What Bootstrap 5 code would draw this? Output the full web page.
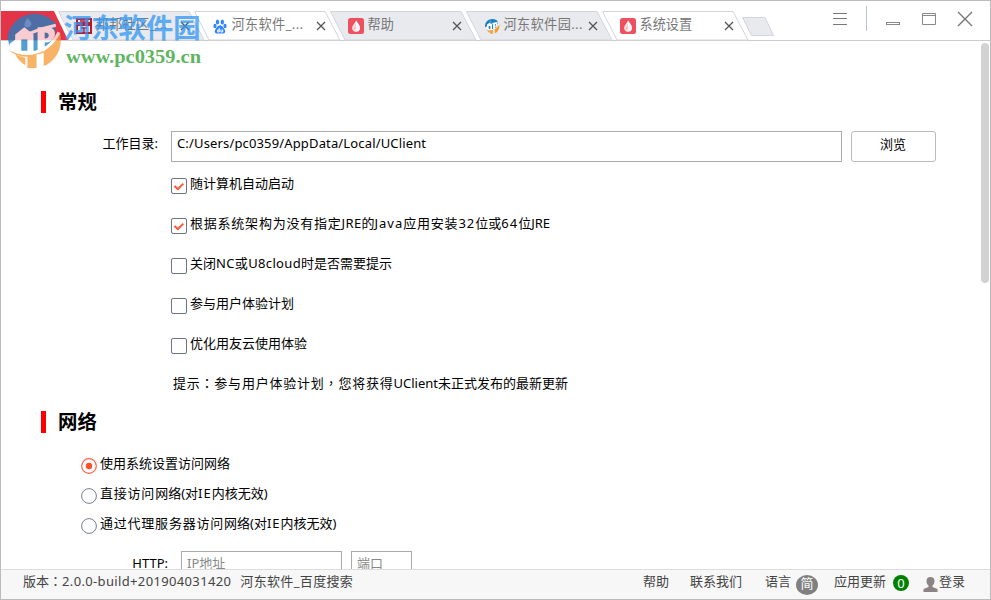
<!DOCTYPE html>
<html lang="zh-CN">
<head>
<meta charset="utf-8">
<title>系统设置</title>
<meta name="viewport" content="width=device-width, initial-scale=1">
<link href="https://cdn.jsdelivr.net/npm/bootstrap@5.3.0/dist/css/bootstrap.min.css" rel="stylesheet">
<style>
body{font:13px/20px "Noto Sans","Noto Sans CJK SC",sans-serif;color:#000;background:#fff}
.win{width:991px;height:600px;border:1px solid #bbb}
.topbar{height:40px;border-bottom:1px solid #ccc}
.strip{padding-top:10px}
.tab-first{width:56px;height:29px}
.tab-one{width:136px;height:29px;color:#777}
.tab-one>.shape,.tab-first>.shape{position:absolute;left:0;top:0;width:152px;height:30px}
.tab-one .ico{width:16px;height:16px;margin:7px 3.5px 0 19px}
.tab-one .cap{width:82.5px;font-size:13.2px;line-height:20px;margin-top:3px;white-space:nowrap}
.tab-one .x{width:10px;height:10px;margin:10px 0 0 2px}
.content-area{height:528px}
.sec{height:22px;padding-left:12px;border-left:5px solid #f00;font-size:19.4px;font-weight:700;line-height:22px;margin-left:40px}
.lbl{width:157px;line-height:24px}
.field{border:1px solid #aaa;border-radius:0;height:31px}
.path{width:671px;padding:1px 5px;line-height:21px;letter-spacing:.15px}
.browse{width:85px;height:31px;border:1px solid #bbb;border-radius:3px;margin-left:9px;font-size:13px;line-height:20px;padding:0 1px 5px 0;color:#000;background:#fff}
.opt{height:40px;line-height:18px;margin-left:170px}
.opt svg,.rad svg{width:16px;height:16px;margin:4px 3px 0 0}
.rad{height:30px;line-height:18px;margin-left:80px}
.w{letter-spacing:.78px}
.w1{letter-spacing:1px}
.w3{letter-spacing:.35px}
.mid{font-family:"Noto Sans CJK TC",sans-serif}
.statusbar{height:30px;background:#f7f7f7;border-top:1px solid #ddd;color:#444}
.thumb{right:1px;top:2px;width:8px;height:240px;border-radius:4px;background:#d2d2d2}
.lang{width:22px;height:20px;border-radius:50%;background:#808080;color:#fff}
.num{width:16px;height:16px;border-radius:50%;background:#008000;color:#fff;line-height:16px}
.wm{left:0;top:8px;width:205px;height:62px;pointer-events:none}
</style>
<script src="https://cdn.jsdelivr.net/npm/bootstrap@5.3.0/dist/js/bootstrap.bundle.min.js"></script>
</head>
<body class="overflow-hidden">
<svg width="0" height="0" class="position-absolute">
  <symbol id="close" viewBox="0 0 10 10"><path d="M1 1l8 8M9 1l-8 8" stroke="#555" stroke-width="1.3" fill="none"/></symbol>
  <symbol id="flame" viewBox="0 0 16 16"><rect width="16" height="16" rx="2.500" fill="#ef5060"/><path d="M8.2 2.500C9.500 5 12 7 12 9.800a3.900 3.900 0 0 1-7.800 0C4.200 7.500 7 5.500 8.200 2.500z" fill="#fff"/><path d="M8 5.500c-.5 3 1.300 3 .3 5.200L6.500 13c-1.500-.9-2-2-1.800-3.500z" fill="#f6a5ad" opacity=".6"/></symbol>
  <symbol id="globe" viewBox="0 0 56 58">
    <path d="M2.500 26A27 27 0 0 1 51 15C42 17 20 22 4 35z" fill="#1c80c4"/>
    <path d="M10 24l9-8 10 7 8-7h10q5 2 1 10l-4 8-14 6H12z" fill="#1c80c4"/>
    <path d="M4 39C18 49 42 43 54 22C58 40 47 52 38 55V42L31 44V57H22V46Q10 46 4 39z" fill="#f79a35"/>
    <path d="M10 44Q15 52 20 54V47z" fill="#f79a35"/>
    <path d="M50 15C36 18 18 24 6 34Q9 44 26 42.500Q44 40 53 22" fill="none" stroke="#fff" stroke-width="3"/>
    <path d="M10 39V24l9-7 9 7v19h-6V29h-6v13zM32 42V17h11q7 1 6 8-2 7-10 7v8zM39 22v6q4 0 4-3t-4-3z" fill="#fff" fill-rule="evenodd"/>
    <path d="M22 8q6 5 3 8-4 3-6-1 0-3 3-7z" fill="#48a8ea"/>
  </symbol>
  <symbol id="check" viewBox="0 0 16 16"><rect x=".5" y=".5" width="15" height="15" rx="1.500" fill="#fff" stroke="#6d7488"/><path d="M3.500 8l3.300 3.100L12.300 5.600" fill="none" stroke="#ff5533" stroke-width="2"/></symbol>
  <symbol id="box" viewBox="0 0 16 16"><rect x=".5" y=".5" width="15" height="15" rx="1.500" fill="#fff" stroke="#6d7488"/></symbol>
  <symbol id="ring" viewBox="0 0 16 16"><circle cx="8" cy="8" r="7.400" fill="#fff" stroke="#777e92"/></symbol>
</svg>
<div class="win position-relative d-flex flex-column overflow-hidden">
  <header class="topbar d-flex flex-shrink-0">
    <nav class="strip d-flex">
      <div class="tab-first position-relative"><svg class="shape"><path d="M0 0H53L67 29H0z" fill="#e53448"/></svg></div>
      <div class="tab-one position-relative"><svg class="shape"><path d="M1.500 .5H132L147 29H16z" fill="#e9eaee" stroke="#d3d4dd"/></svg>
        <div class="position-relative d-flex"><svg class="ico" viewBox="0 0 16 16"><path d="M1 1h14v4H1zM1 7h14v8H1z" fill="none" stroke="#c41527" stroke-width="2"/><path d="M4 3h8M5 10h6M8 10v4" stroke="#c41527" stroke-width="1.500"/></svg><span class="cap w3">邦邦社区_...</span><svg class="x"><use href="#close"/></svg></div></div>
      <div class="tab-one position-relative"><svg class="shape"><path d="M1.500 .5H132L147 29H16z" fill="#fff" stroke="#d3d4dd"/></svg>
        <div class="position-relative d-flex"><svg class="ico" viewBox="0 0 16 16" fill="#3385ff"><ellipse cx="5.500" cy="4" rx="1.700" ry="2.500"/><ellipse cx="10.300" cy="4" rx="1.700" ry="2.500"/><ellipse cx="3" cy="8" rx="1.600" ry="2.200"/><ellipse cx="13" cy="8" rx="1.600" ry="2.200"/><path d="M8 7.300c2 0 3 2.300 4.500 3.900 1.600 1.800.5 4.300-1.400 4.300H5c-2 0-3-2.500-1.500-4.300C5 9.600 6 7.300 8 7.300z"/><path d="M7.300 10v4H5.700v-2h1.600M9 11.500v2.500h1.700v-2.500" fill="none" stroke="#fff"/></svg><span class="cap w3">河东软件_...</span><svg class="x"><use href="#close"/></svg></div></div>
      <div class="tab-one position-relative"><svg class="shape"><path d="M1.500 .5H132L147 29H16z" fill="#e9eaee" stroke="#d3d4dd"/></svg>
        <div class="position-relative d-flex"><svg class="ico"><use href="#flame"/></svg><span class="cap">帮助</span><svg class="x"><use href="#close"/></svg></div></div>
      <div class="tab-one position-relative"><svg class="shape"><path d="M1.500 .5H132L147 29H16z" fill="#e9eaee" stroke="#d3d4dd"/></svg>
        <div class="position-relative d-flex"><svg class="ico"><use href="#globe"/></svg><span class="cap w3">河东软件园...</span><svg class="x"><use href="#close"/></svg></div></div>
      <div class="tab-one position-relative"><svg class="shape"><path d="M1.500 .5H132L147 29H16z" fill="#fff" stroke="#d3d4dd"/></svg>
        <div class="position-relative d-flex"><svg class="ico"><use href="#flame"/></svg><span class="cap">系统设置</span><svg class="x"><use href="#close"/></svg></div></div>
      <svg width="40" height="29" class="position-relative"><path d="M5.500 6.500H28L36.500 24.500H14.500z" fill="#e9eaee" stroke="#d3d4dd"/></svg>
    </nav>
    <svg class="ms-auto" width="165" height="39" fill="none" stroke="#777"><path d="M8 12.500h14M8 17.500h14M8 23.500h14"/><path d="M41.500 5v25" stroke="#b8c4d0"/><rect x="61.500" y="21.500" width="13" height="2" stroke="#888"/><path d="M97.500 12.500h13v11h-13zM97.500 14.500h13" stroke="#888"/><path d="M133 11l14 14M147 11l-14 14" stroke-width="1.400"/></svg>
  </header>

  <main class="content-area position-relative overflow-hidden flex-shrink-0">
    <h1 class="sec mb-0" style="margin-top:50px">常规</h1>
    <div class="d-flex" style="margin-top:18px">
      <label class="lbl text-end">工作目录:</label>
      <div class="field path" style="margin-left:13px"><span>C:/Users/pc0359/AppData/Local/UClient</span></div>
      <button class="browse btn">浏览</button>
    </div>
    <div style="height:12px"></div>
    <div class="opt d-flex"><svg><use href="#check"/></svg><span>随计算机自动启动</span></div>
    <div class="opt d-flex"><svg><use href="#check"/></svg><span><span class="w">根据系统架构为没有指定</span><span class="w3">JRE</span>的<span class="w1">Java</span><span class="w">应用安装<span class="w1">32</span></span>位或<span class="w1">64</span>位JRE</span></div>
    <div class="opt d-flex"><svg><use href="#box"/></svg><span><span>关闭</span><span class="w3">NC或U8cloud</span>时是否需要提示</span></div>
    <div class="opt d-flex"><svg><use href="#box"/></svg><span>参与用户体验计划</span></div>
    <div class="opt d-flex"><svg><use href="#box"/></svg><span>优化用友云使用体验</span></div>
    <div class="opt" style="padding-left:2px"><span class="w">提示<span class="mid" lang="zh-TW">：</span>参与用户体验计划<span class="mid" lang="zh-TW">，</span>您将获得</span>UClient未正式发布的最新更新</div>
    <h1 class="sec mb-0" style="margin-top:-3px">网络</h1>
    <div style="height:21px"></div>
    <div class="rad d-flex"><svg viewBox="0 0 16 16"><circle cx="8" cy="8" r="7.300" fill="#fff" stroke="#ff6347" stroke-width="1.200"/><circle cx="8" cy="8" r="3.200" fill="#ff5028"/></svg><span>使用系统设置访问网络</span></div>
    <div class="rad d-flex"><svg><use href="#ring"/></svg><span><span class="w">直接访问</span>网络(对<span class="w1">IE</span>内核无效)</span></div>
    <div class="rad d-flex"><svg><use href="#ring"/></svg><span><span class="w">通过代理服务器访问</span>网络(对<span class="w1">IE</span>内核无效)</span></div>
    <div class="d-flex" style="margin-top:7px">
      <label class="text-end" style="width:167px;line-height:24px">HTTP:</label>
      <div class="field" style="width:161px;margin-left:13px;padding:1px 5px;color:#888;line-height:20px">IP地址</div>
      <div class="field" style="width:61px;margin-left:9px;padding:1px 5px;color:#888;line-height:20px">端口</div>
    </div>
    <div class="thumb position-absolute"></div>
  </main>

  <footer class="statusbar d-flex flex-shrink-0">
    <span style="margin-left:22px;margin-top:1px">版本<span class="mid" lang="zh-TW">：</span><span class="w3">2.0.0-build+201904031420</span></span>
    <span class="w3" style="margin-left:9px;margin-top:1px">河东软件_百度搜索</span>
    <div class="d-flex ms-auto" style="margin-right:25px">
      <span style="margin-top:1px">帮助</span>
      <span style="margin:1px 0 0 21px">联系我们</span>
      <span style="margin:1px 0 0 23px">语言</span>
      <span class="lang text-center" style="margin:5px 0 0 5px;line-height:17px">简</span>
      <span style="margin:1px 0 0 16px">应用更新</span>
      <span class="num text-center" style="margin:5px 0 0 7px">0</span>
      <svg width="15" height="15" style="margin:7px 0 0 14px" fill="#8c8484"><path d="M7.500 0c2.500 0 4 1.500 4 4 0 2-.8 3.500-2 4.500v1.500l5 2V15H.5v-3l5-2V8.500c-1.200-1-2-2.500-2-4.500 0-2.500 1.500-4 4-4z"/></svg>
      <span style="margin:1px 0 0 1px">登录</span>
    </div>
  </footer>
  <svg class="wm position-absolute">
    <g opacity=".75"><use href="#globe" x="4" y="1" width="57" height="59"/>
    <text x="63" y="29" font-family="Noto Sans CJK SC" font-weight="700" font-size="27.300" fill="#2f97f5">河东软件园</text></g>
    <text x="65" y="54" textLength="135" lengthAdjust="spacingAndGlyphs" font-family="Liberation Serif" font-weight="700" font-size="19" fill="#5fb660">www.pc0359.cn</text>
  </svg>
</div>
</body>
</html>
